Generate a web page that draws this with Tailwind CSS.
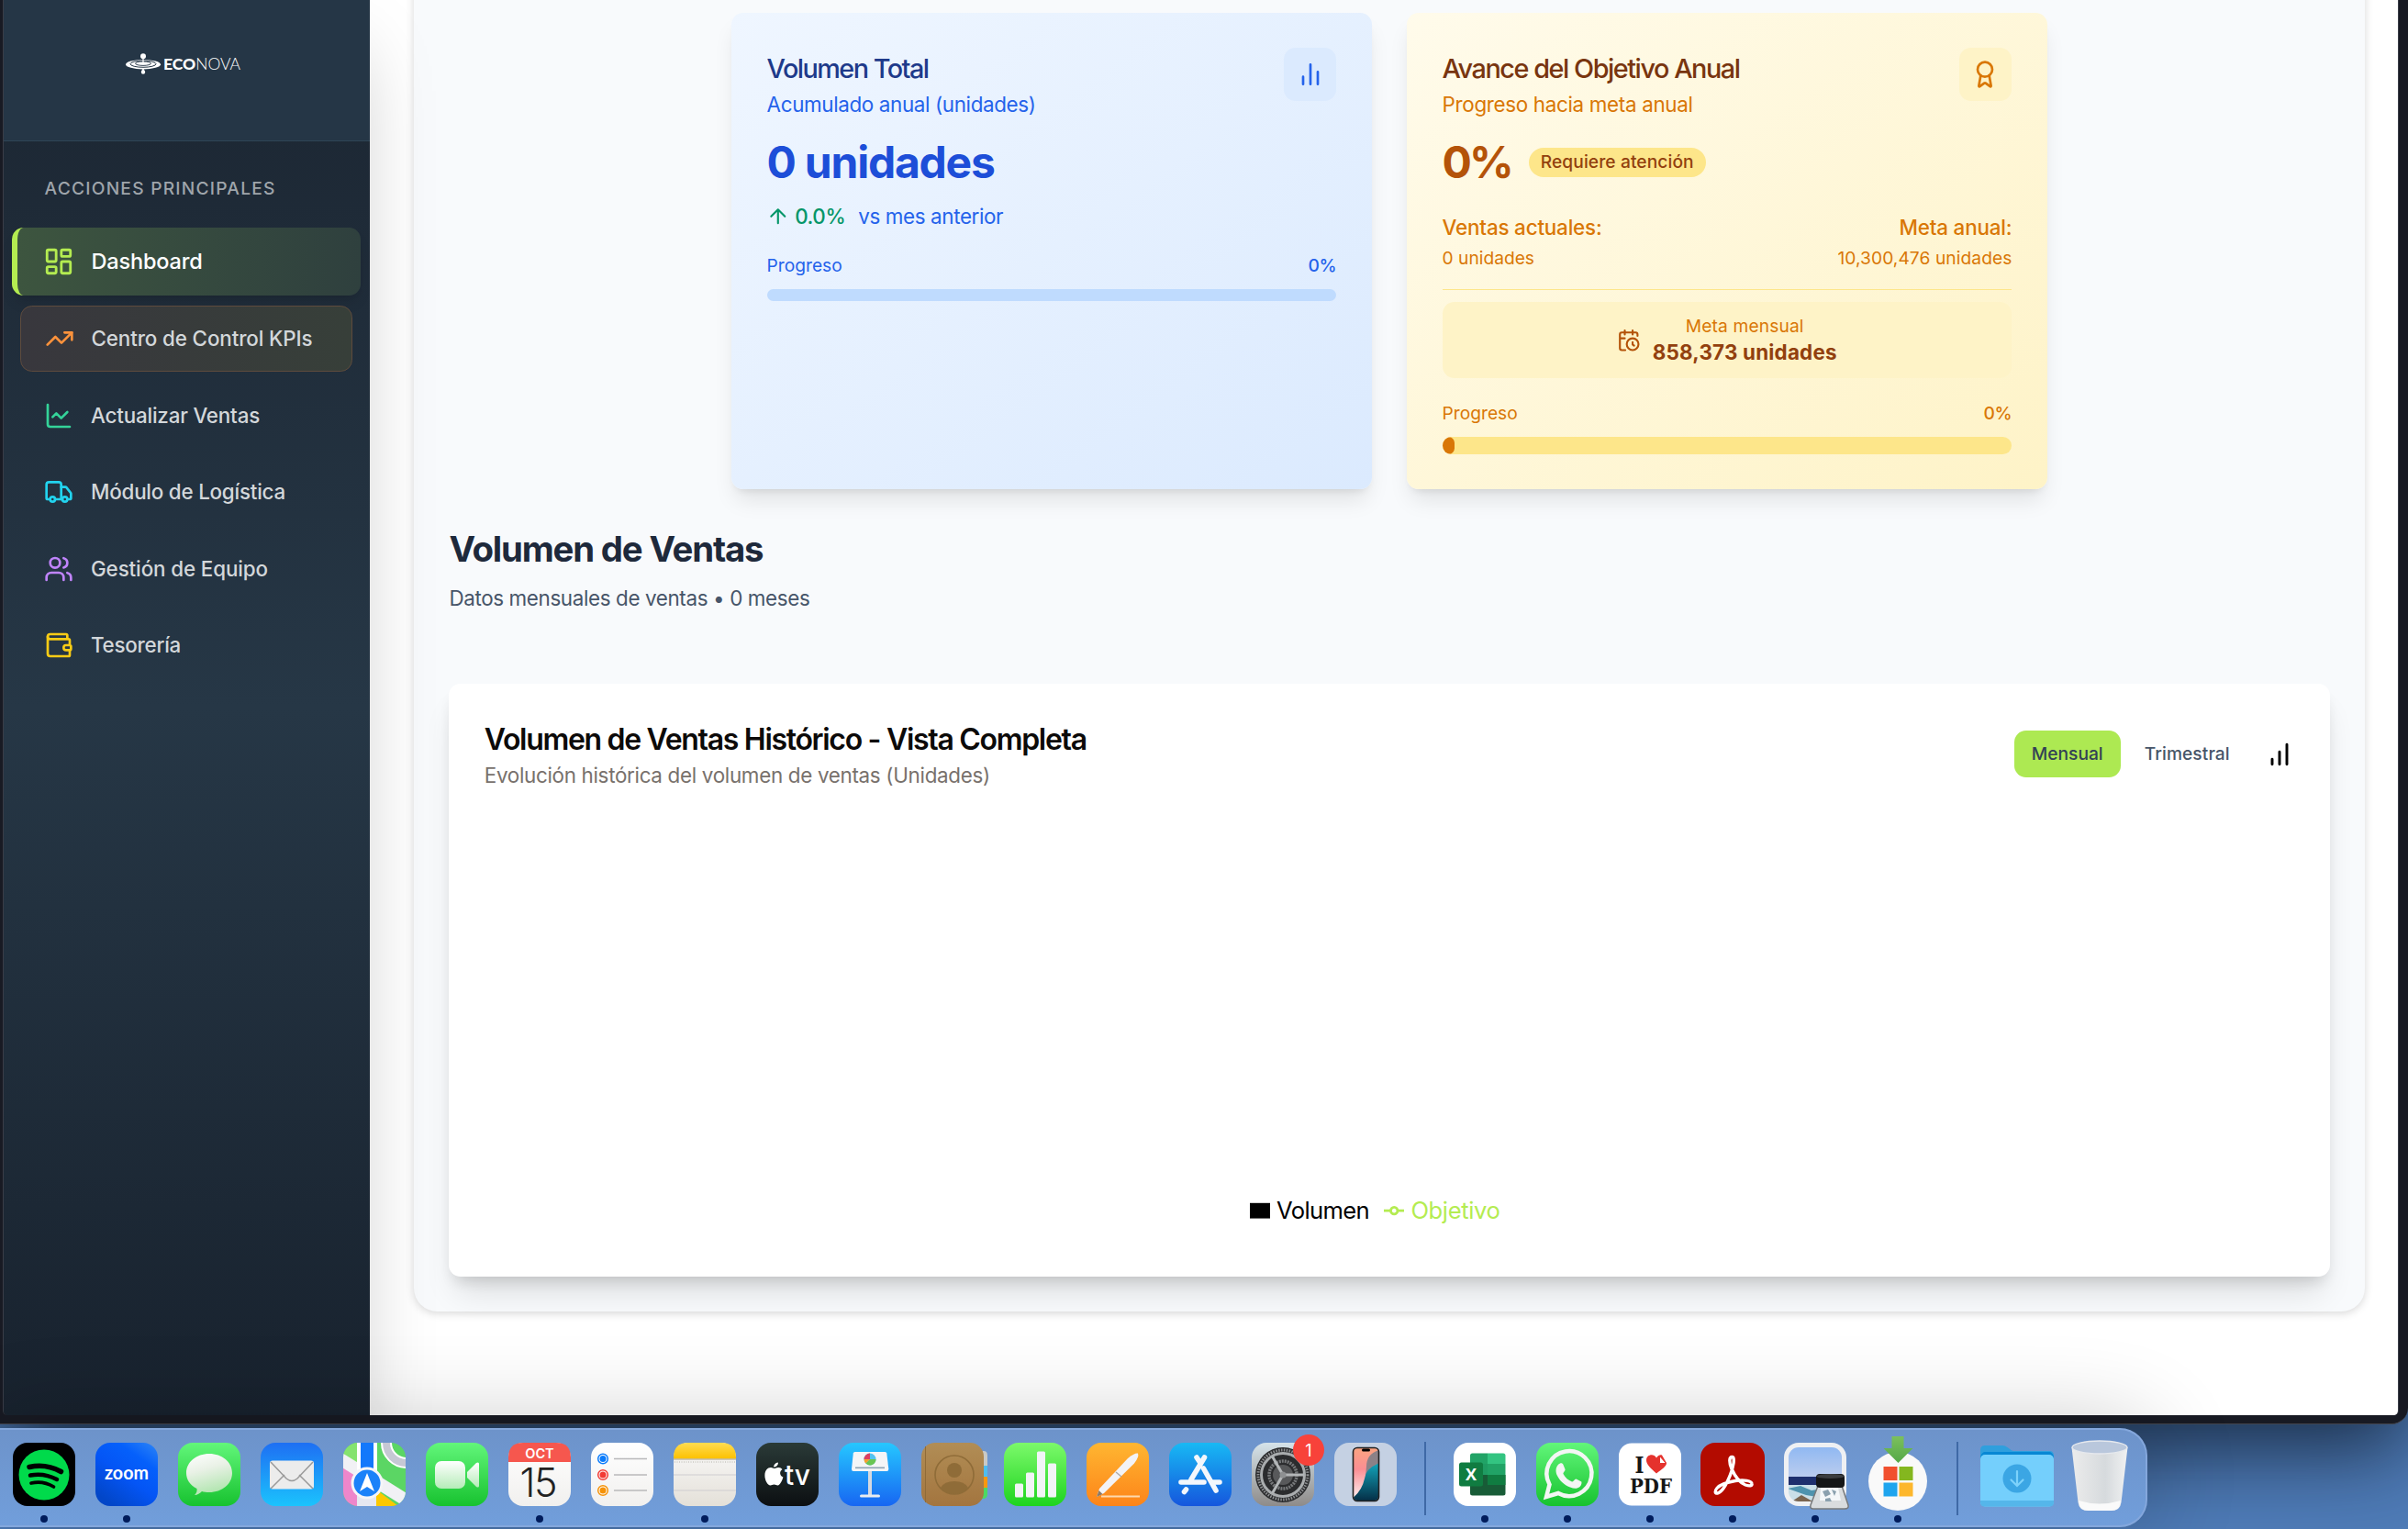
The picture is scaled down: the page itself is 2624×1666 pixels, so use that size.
<!DOCTYPE html>
<html lang="es" class="text-[25.6px]">
<head>
<meta charset="utf-8">
<title>Econova</title>
<script src="https://cdn.jsdelivr.net/npm/@tailwindcss/browser@4"></script>
</head>
<body class="h-[1666px] w-[2624px] overflow-hidden bg-[#4f7cb8] font-['Inter',sans-serif]">
<svg class="absolute size-0" aria-hidden="true">
  <defs>
    <linearGradient id="green" x2="0" y2="1"><stop stop-color="#62f67a"/><stop offset="1" stop-color="#17c22f"/></linearGradient>
    <linearGradient id="zoomblue" x1="1" y1="0" x2=".3" y2="1"><stop stop-color="#2f86f5"/><stop offset=".3" stop-color="#0560fb"/><stop offset=".6" stop-color="#0455f5"/><stop offset="1" stop-color="#0246c8"/></linearGradient>
    <linearGradient id="mail" x2="0" y2="1"><stop stop-color="#1e6ff3"/><stop offset="1" stop-color="#1bc3fd"/></linearGradient>
    <linearGradient id="bubble" x2=".3" y2="1"><stop stop-color="#fff"/><stop offset=".45" stop-color="#e9f1e6"/><stop offset="1" stop-color="#b4e6b2"/></linearGradient>
    <linearGradient id="cam" x2="0" y2="1"><stop stop-color="#fff"/><stop offset="1" stop-color="#b5ecb8"/></linearGradient>
    <linearGradient id="paper" x2="0" y2="1"><stop stop-color="#fff"/><stop offset="1" stop-color="#f1f0ee"/></linearGradient>
    <linearGradient id="note" x2="0" y2="1"><stop stop-color="#fafafa"/><stop offset="1" stop-color="#e4e0d8"/></linearGradient>
    <linearGradient id="yel" x2="0" y2="1"><stop stop-color="#ffdc52"/><stop offset="1" stop-color="#fdc100"/></linearGradient>
    <linearGradient id="tv" x2="0" y2="1"><stop stop-color="#2a3a37"/><stop offset="1" stop-color="#0c0f12"/></linearGradient>
    <linearGradient id="key" x2="0" y2="1"><stop stop-color="#26c7ff"/><stop offset="1" stop-color="#1766f2"/></linearGradient>
    <linearGradient id="brown" x2="0" y2="1"><stop stop-color="#b18d55"/><stop offset="1" stop-color="#a3753f"/></linearGradient>
    <linearGradient id="num" x2="0" y2="1"><stop stop-color="#7cf96b"/><stop offset="1" stop-color="#1ed41f"/></linearGradient>
    <linearGradient id="pages" x2="0" y2="1"><stop stop-color="#ffb631"/><stop offset="1" stop-color="#fd8419"/></linearGradient>
    <linearGradient id="store" x2="0" y2="1"><stop stop-color="#18b9f4"/><stop offset="1" stop-color="#1556dd"/></linearGradient>
    <linearGradient id="sys" x2="0" y2="1"><stop stop-color="#d5e3ea"/><stop offset="1" stop-color="#8e8b89"/></linearGradient>
    <linearGradient id="trash"><stop stop-color="#ececec"/><stop offset=".6" stop-color="#d6dadd"/><stop offset="1" stop-color="#f0f1f2"/></linearGradient>
    <linearGradient id="sky" x2="0" y2="1"><stop stop-color="#8fb8f2"/><stop offset="1" stop-color="#bccdee"/></linearGradient>
    <linearGradient id="screen" x2="0" y2="1"><stop stop-color="#fba57f"/><stop offset=".4" stop-color="#fb8e93"/><stop offset="1" stop-color="#fff"/></linearGradient>
    <linearGradient id="sea" x2="0" y2="1"><stop stop-color="#12a5bb"/><stop offset="1" stop-color="#04273f"/></linearGradient>
    <linearGradient id="arrow" x2="0" y2="1"><stop stop-color="#7cc05d"/><stop offset="1" stop-color="#54a847"/></linearGradient>
    <clipPath id="sq"><rect x="1" y="1" width="68" height="69" rx="16"/></clipPath>
    <clipPath id="photo"><rect x="6" y="6" width="58" height="59" rx="11"/></clipPath>
    <clipPath id="phone"><rect x="22" y="7" width="27" height="57" rx="4"/></clipPath>
  </defs>
</svg>

<!-- Browser window -->
<div class="relative flex h-[1552px] w-[2624px] rounded-br-[18px] border-b border-[#43454d] bg-[#181a23] pb-[9px] shadow-[0_30px_90px_rgba(10,20,35,0.75)]">
  <div class="ml-[3px] flex h-[1542px] w-[2611px] overflow-hidden rounded-b-[5px] border-x border-[#3a3d47]">

    <aside class="relative z-10 flex w-[399px] shrink-0 flex-col bg-linear-to-b from-[#1b2531] via-[#263746] to-[#18222e] shadow-[0_40px_80px_-19px_rgba(0,0,0,0.25)]">
      <div class="flex h-[154px] items-center justify-center border-b border-[#2f4556] bg-[#253646] pr-[7px] pb-[13px]">
        <svg class="h-6 w-[126px]" viewBox="0 0 126 38" fill="none">
          <ellipse cx="19" cy="19" rx="19" ry="5.2" fill="#fff"/>
          <ellipse cx="19" cy="18.5" rx="14" ry="3.6" stroke="#253646" stroke-width="1"/>
          <ellipse cx="19" cy="18" rx="8.5" ry="2.2" stroke="#253646" stroke-width=".9"/>
          <circle cx="19" cy="10" r="3" fill="#fff"/>
          <path d="M18.4 12h1.2v6h-1.2zM19 23c1 2 2.2 3 2.2 4.300a2.200 2.200 0 0 1-4.400 0c0-1.300 1.200-2.300 2.200-4.300z" fill="#fff"/>
          <text x="41" y="25" font-family="Lato" font-size="17.500" fill="#fff" textLength="84"><tspan font-weight="900">ECO</tspan><tspan font-weight="300">NOVA</tspan></text>
        </svg>
      </div>
      <div class="mt-[39px] ml-[44.500px] h-6 text-xs leading-[25.600px] font-medium whitespace-nowrap text-[#9fa5ab]"><span class="tracking-[0.064em]">ACCIONES PRINCIPALES</span></div>
      <nav class="mt-[17px] flex flex-col pr-[10px] pl-[9px] text-sm whitespace-nowrap text-[#d3d7da]">
        <div class="flex h-[74px] items-center rounded-lg border-l-[6px] border-[#b4ec51] bg-linear-to-r from-[#3d553f] to-[#2f403e] pb-[1px] pl-[27.500px] text-[23.500px] font-medium text-white shadow-lg">
          <svg class="size-[34px] text-[#b4ec51]" viewBox="0 0 24 24" fill="none" stroke="currentColor" stroke-width="2" stroke-linecap="round" stroke-linejoin="round"><rect x="3" y="3" width="7" height="9" rx="1"/><rect x="14" y="3" width="7" height="5" rx="1"/><rect x="14" y="12" width="7" height="9" rx="1"/><rect x="3" y="16" width="7" height="5" rx="1"/></svg>
          <span class="ml-[19px] tracking-[-0.0074em]">Dashboard</span>
        </div>
        <div class="mx-[9px] mt-[11px] flex h-[72px] items-center rounded-lg border border-[#5e4b3d] bg-linear-to-r from-[#38373d] to-[#373f39] pl-[25.500px] font-medium">
          <svg class="h-[32px] w-[32px] text-[#fb923c]" viewBox="0 0 24 24" fill="none" stroke="currentColor" stroke-width="2" stroke-linecap="round" stroke-linejoin="round"><path d="M16 7h6v6"/><path d="m22 7-8.500 8.500-5-5L2 17"/></svg>
          <span class="ml-[19px] tracking-[-0.0055em]">Centro de Control KPIs</span>
        </div>
        <div class="mx-[9px] mt-[12px] flex h-[72px] items-center pl-[26px] font-medium">
          <svg class="h-[32px] w-[32px] text-[#34d399]" viewBox="0 0 24 24" fill="none" stroke="currentColor" stroke-width="2" stroke-linecap="round" stroke-linejoin="round"><path d="M3 3v16a2 2 0 0 0 2 2h16"/><path d="m19 9-5 5-4-4-3 3"/></svg>
          <span class="ml-[19px] tracking-[-0.0088em]">Actualizar Ventas</span>
        </div>
        <div class="mx-[9px] mt-[11px] flex h-[72px] items-center pl-[26px] font-medium">
          <svg class="h-[32px] w-[32px] text-[#22d3ee]" viewBox="0 0 24 24" fill="none" stroke="currentColor" stroke-width="2" stroke-linecap="round" stroke-linejoin="round"><path d="M14 18V6a2 2 0 0 0-2-2H4a2 2 0 0 0-2 2v11a1 1 0 0 0 1 1h2"/><path d="M15 18H9"/><path d="M19 18h2a1 1 0 0 0 1-1v-3.650a1 1 0 0 0-.220-.624l-3.480-4.350A1 1 0 0 0 17.520 8H14"/><circle cx="17" cy="18" r="2"/><circle cx="7" cy="18" r="2"/></svg>
          <span class="ml-[19px] tracking-[-0.01em]">Módulo de Logística</span>
        </div>
        <div class="mx-[9px] mt-[12px] flex h-[72px] items-center pl-[26px] font-medium">
          <svg class="h-[32px] w-[32px] text-[#c084fc]" viewBox="0 0 24 24" fill="none" stroke="currentColor" stroke-width="2" stroke-linecap="round" stroke-linejoin="round"><path d="M16 21v-2a4 4 0 0 0-4-4H6a4 4 0 0 0-4 4v2"/><circle cx="9" cy="7" r="4"/><path d="M22 21v-2a4 4 0 0 0-3-3.870"/><path d="M16 3.130a4 4 0 0 1 0 7.750"/></svg>
          <span class="ml-[19px] tracking-[-0.0052em]">Gestión de Equipo</span>
        </div>
        <div class="mx-[9px] mt-[11px] flex h-[72px] items-center pl-[26px] font-medium">
          <svg class="h-[32px] w-[32px] text-[#facc15]" viewBox="0 0 24 24" fill="none" stroke="currentColor" stroke-width="2" stroke-linecap="round" stroke-linejoin="round"><path d="M19 7V4a1 1 0 0 0-1-1H5a2 2 0 0 0 0 4h15a1 1 0 0 1 1 1v4h-3a2 2 0 0 0 0 4h3a1 1 0 0 0 1-1v-2a1 1 0 0 0-1-1"/><path d="M3 5v14a2 2 0 0 0 2 2h15a1 1 0 0 0 1-1v-4"/></svg>
          <span class="ml-[19px] tracking-[-0.0114em]">Tesorería</span>
        </div>
      </nav>
    </aside>

    <main class="flex h-[1542px] min-w-0 flex-1 flex-col bg-white pr-[36px] pl-[48px]">
      <div class="-mt-[40px] flex h-[1469px] shrink-0 flex-col rounded-2xl bg-[#f8fafc] px-6 pt-[54px] shadow-[0_2px_10px_rgba(0,0,0,0.16)]">

        <section class="mx-auto grid h-[519px] w-full max-w-4xl grid-cols-2 gap-6 whitespace-nowrap">
          <article class="rounded-lg bg-linear-to-br from-[#eff6ff] to-[#dbeafe] px-6 pt-[38px] shadow-[0_16px_24px_-5px_rgba(0,0,0,0.10),0_6px_10px_-6px_rgba(0,0,0,0.12)]">
            <div class="flex h-[86px] justify-between">
              <div class="pt-2">
                <h3 class="mt-[-5px] text-lg leading-[29px] font-medium tracking-[-0.053em] text-[#1e3a8a]">Volumen Total</h3>
                <p class="mt-[9px] text-sm leading-[32px] tracking-[-0.0158em] text-[#2563eb]">Acumulado anual (unidades)</p>
              </div>
              <div class="flex size-[57.600px] items-center justify-center rounded-lg bg-[#dbeafe]">
                <svg class="size-[32px] text-[#2563eb]" viewBox="0 0 24 24" fill="none" stroke="currentColor" stroke-width="2" stroke-linecap="round"><path d="M18 20V10M12 20V4M6 20v-6"/></svg>
              </div>
            </div>
            <p class="mt-[14.500px] text-3xl leading-[48px] font-bold tracking-[-0.0258em] text-[#1d4ed8]">0 unidades</p>
            <div class="mt-[19px] flex h-[32px] items-center text-sm leading-[32px]">
              <svg class="h-[25.600px] w-[25.600px] -ml-[1px] text-[#059669]" viewBox="0 0 24 24" fill="none" stroke="currentColor" stroke-width="2" stroke-linecap="round" stroke-linejoin="round"><path d="m5 12 7-7 7 7M12 19V5"/></svg>
              <span class="ml-[6px] font-medium tracking-[-0.0194em] text-[#059669]">0.0%</span>
              <span class="ml-[14px] tracking-[-0.0164em] text-[#2563eb]">vs mes anterior</span>
            </div>
            <div class="mt-[25px] flex justify-between text-xs leading-[25.600px] text-[#2563eb]"><span>Progreso</span><span class="font-medium tracking-[-0.0118em]">0%</span></div>
            <div class="mt-[12.500px] h-[13px] rounded-full bg-[#bfdbfe]"></div>
          </article>

          <article class="rounded-lg bg-linear-to-br from-[#fffbeb] to-[#fef3c7] px-6 pt-[38px] shadow-[0_16px_24px_-5px_rgba(0,0,0,0.10),0_6px_10px_-6px_rgba(0,0,0,0.12)]">
            <div class="flex h-[86px] justify-between">
              <div class="pt-2">
                <h3 class="mt-[-5px] text-lg leading-[29px] font-medium tracking-[-0.0503em] text-[#78350f]">Avance del Objetivo Anual</h3>
                <p class="mt-[9px] text-sm leading-[32px] tracking-[-0.0144em] text-[#d97706]">Progreso hacia meta anual</p>
              </div>
              <div class="flex size-[57.600px] items-center justify-center rounded-lg bg-[#fef3c7]">
                <svg class="size-[32px] -ml-[1px] text-[#d97706]" viewBox="0 0 24 24" fill="none" stroke="currentColor" stroke-width="2" stroke-linecap="round" stroke-linejoin="round"><path d="m15.477 12.890 1.515 8.526a.5.5 0 0 1-.810.470l-3.580-2.687a1 1 0 0 0-1.197 0l-3.586 2.686a.5.5 0 0 1-.810-.469l1.514-8.526"/><circle cx="12" cy="8" r="6"/></svg>
              </div>
            </div>
            <div class="mt-[14.500px] flex h-[48px] items-center">
              <span class="text-3xl leading-[48px] font-bold tracking-[-0.06em] text-[#b45309]">0%</span>
              <span class="ml-[19px] flex h-[32px] items-center rounded-full bg-[#fde68a] px-2 text-xs font-medium tracking-[0.0046em] text-[#92400e]">Requiere atención</span>
            </div>
            <div class="mt-[31.500px] flex justify-between text-sm leading-[32px] font-medium text-[#d97706]"><span class="tracking-[-0.0079em]">Ventas actuales:</span><span class="tracking-[-0.0074em]">Meta anual:</span></div>
            <div class="mt-[4px] flex justify-between text-xs leading-[26px] text-[#d97706]"><span>0 unidades</span><span class="tracking-[0.0036em]">10,300,476 unidades</span></div>
            <div class="mt-[20.500px] h-[1.600px] bg-[#fde68a]"></div>
            <div class="mt-[13px] flex h-[83px] items-center justify-center rounded-lg bg-[#fef3c7]">
              <svg class="h-[25.600px] w-[25.600px] text-[#b45309]" viewBox="0 0 24 24" fill="none" stroke="currentColor" stroke-width="2" stroke-linecap="round" stroke-linejoin="round"><path d="M21 7.500V6a2 2 0 0 0-2-2H5a2 2 0 0 0-2 2v14a2 2 0 0 0 2 2h3.500M16 2v4M8 2v4M3 10h5M17.500 17.500 16 16.300V14"/><circle cx="16" cy="16" r="6"/></svg>
              <div class="ml-2 flex flex-col items-center">
                <span class="text-xs leading-[26px] tracking-[0.0074em] text-[#d97706]">Meta mensual</span>
                <span class="text-sm leading-[32px] font-bold tracking-[0.0087em] text-[#92400e]">858,373 unidades</span>
              </div>
            </div>
            <div class="mt-[25px] flex justify-between text-xs leading-[26px] text-[#d97706]"><span>Progreso</span><span class="font-medium tracking-[-0.0118em]">0%</span></div>
            <div class="mt-[13px] h-[19px] overflow-hidden rounded-full bg-[#fde68a]"><div class="h-full rounded-full bg-[#d97706]" style="width:2.1%"></div></div>
          </article>
        </section>

        <h2 class="mt-[41px] text-2xl leading-[48px] font-bold tracking-[-0.0312em] whitespace-nowrap text-[#1e293b]">Volumen de Ventas</h2>
        <p class="mt-[14px] text-sm leading-[32px] tracking-[-0.0163em] whitespace-nowrap text-[#475569]">Datos mensuales de ventas • 0 meses</p>

        <section class="mt-[77px] flex h-[646px] flex-col rounded-lg bg-white px-6 whitespace-nowrap shadow-[0_24px_34px_-8px_rgba(0,0,0,0.12),0_10px_16px_-6px_rgba(0,0,0,0.14)]">
          <div class="flex justify-between pt-[38px]">
            <div>
              <h3 class="mt-[4px] text-xl leading-[38px] font-semibold tracking-[-0.0409em] text-[#0c0a09]">Volumen de Ventas Histórico - Vista Completa</h3>
              <p class="mt-[3.500px] text-sm leading-[32px] tracking-[-0.0137em] text-[#78716c]">Evolución histórica del volumen de ventas (Unidades)</p>
            </div>
            <div class="mt-[13px] flex h-[51px] items-center text-xs font-medium">
              <button class="flex h-[51px] w-[116px] items-center justify-center rounded-lg bg-[#ade952] text-[#334155]">Mensual</button>
              <button class="ml-[26px] tracking-[0.0042em] text-[#475569]">Trimestral</button>
              <svg class="ml-[38.500px] size-[32px] text-black" viewBox="0 0 24 24" fill="none" stroke="currentColor" stroke-width="2.200" stroke-linecap="round"><path d="M12 20V10M18 20V4M6 20v-4"/></svg>
            </div>
          </div>
          <div class="mt-auto mr-[32px] mb-[53px] flex items-center justify-center text-base leading-[38px]">
            <svg class="size-[22.400px]" viewBox="0 0 32 32"><path d="M0 4h32v24H0z"/></svg>
            <span class="ml-[7px] tracking-[-0.0251em] text-black">Volumen</span>
            <svg class="ml-[16px] size-[22.400px]" viewBox="0 0 32 32" fill="none" stroke="#b4ec51" stroke-width="4"><path d="M0 16h10.670a5.330 5.330 0 1 1 10.660 0H32M21.330 16a5.330 5.330 0 1 1-10.660 0"/></svg>
            <span class="ml-[7px] tracking-[-0.0155em] text-[#b4ec51]">Objetivo</span>
          </div>
        </section>
      </div>
    </main>
  </div>
</div>

<!-- Dock -->
<footer class="relative z-20 mt-[4px] flex h-[108px] w-[2340px] items-start rounded-r-[30px] border-y-2 border-r-2 border-[#84a7dc] bg-linear-to-b from-[#6d93ca] to-[#719edb] pt-[13px] pl-[3px] shadow-[0_0_100px_rgba(0,0,0,0.24)]">
  <div class="flex w-[90px] flex-col items-center"><svg class="h-[72px] w-[70px]" viewBox="0 0 70 72"><rect x="1" y="1" width="68" height="69" rx="16"/><circle cx="35" cy="36" r="27.500" fill="#00da4b"/><g fill="none" stroke="#000" stroke-linecap="round"><path d="M19 27.500q18-4 34.500 5" stroke-width="5.500"/><path d="M20 36.500q15-3 29 4.500" stroke-width="4.500"/><path d="M21 45q13-3 24.500 4" stroke-width="3.700"/></g></svg><i class="mt-[8px] mr-[1px] size-[8px] rounded-full bg-[#001c5c]"></i></div>
  <div class="flex w-[90px] flex-col items-center"><svg class="h-[72px] w-[70px]" viewBox="0 0 70 72"><rect x="1" y="1" width="68" height="69" rx="16" fill="url(#zoomblue)"/><text x="11" y="41" font-size="20" font-weight="700" font-family="Lato" fill="#fff" textLength="48" lengthAdjust="spacingAndGlyphs">zoom</text></svg><i class="mt-[8px] mr-[1px] size-[8px] rounded-full bg-[#001c5c]"></i></div>
  <div class="flex w-[90px] justify-center"><svg class="h-[72px] w-[70px]" viewBox="0 0 70 72"><rect x="1" y="1" width="68" height="69" rx="16" fill="url(#green)"/><path d="M35 13c14 0 25 9 25 21S49 55 35 55c-3 0-6-.4-8-1-2 2-5 4-8 4 2-2 3-4 2.500-7C14 47 10 41 10 34c0-12 11-21 25-21z" fill="url(#bubble)"/></svg></div>
  <div class="flex w-[90px] justify-center"><svg class="h-[72px] w-[70px]" viewBox="0 0 70 72"><rect x="1" y="1" width="68" height="69" rx="16" fill="url(#mail)"/><rect x="11" y="20.500" width="48" height="31" rx="3" fill="#ececec"/><path d="M12 51l15-15M58 51L43 36M12 22l17 18q6 5 12 0l17-18" fill="none" stroke="#9a9a9a" stroke-width="1.500"/></svg></div>
  <div class="flex w-[90px] justify-center"><svg class="h-[72px] w-[70px]" viewBox="0 0 70 72"><g clip-path="url(#sq)"><path fill="#5bd664" d="M0 0h70v72H0z"/><path d="M0 0h20v26L0 12z" fill="#85e36f"/><path d="M0 26l20 14v32H0z" fill="#ee86cb"/><path d="M0 12l70 44v16L0 28z" fill="#f1f1f5"/><path d="M16 40h22v32H16z" fill="#e5e7f0"/><path d="M37 52l24 18H37z" fill="#fcc800"/><path d="M16 0h22v44H16z" fill="#fff"/><path d="M20 0h14v46H20z" fill="#1378fb"/><circle cx="70" cy="1" r="22" fill="none" stroke="#fff" stroke-width="12"/><circle cx="70" cy="1" r="22" fill="none" stroke="#c6c8d4" stroke-width="8"/></g><circle cx="27" cy="45" r="17.500" fill="#f5f5f8"/><circle cx="27" cy="45" r="14.500" fill="#1b82f9"/><path d="M27 34l8 20-8-5-8 5z" fill="#fff"/></svg></div>
  <div class="flex w-[90px] justify-center"><svg class="h-[72px] w-[70px]" viewBox="0 0 70 72"><rect x="1" y="1" width="68" height="69" rx="16" fill="url(#green)"/><rect x="11" y="21" width="33" height="30" rx="7" fill="url(#cam)"/><path d="M46 33l10-10q3-1.500 3 1v24q0 2.500-3 1L46 39z" fill="url(#cam)"/></svg></div>
  <div class="flex w-[90px] flex-col items-center"><svg class="h-[72px] w-[70px]" viewBox="0 0 70 72"><rect x="1" y="1" width="68" height="69" rx="16" fill="url(#paper)"/><path d="M1 22V17Q1 1 17 1h36q16 0 16 16v5z" fill="#f6574e"/><text x="35" y="17.500" text-anchor="middle" font-size="14.500" font-weight="600" fill="#fff">OCT</text><text x="34" y="60" text-anchor="middle" font-size="43" font-weight="300" fill="#222" textLength="41">15</text></svg><i class="mt-[8px] mr-[1px] size-[8px] rounded-full bg-[#001c5c]"></i></div>
  <div class="flex w-[90px] justify-center"><svg class="h-[72px] w-[70px]" viewBox="0 0 70 72"><rect x="1" y="1" width="68" height="69" rx="16" fill="url(#paper)"/><g fill="#fff" stroke-width="1.500"><circle cx="14" cy="18.500" r="5.300" stroke="#0a7bfb"/><circle cx="14" cy="36" r="5.300" stroke="#f23b35"/><circle cx="14" cy="53" r="5.300" stroke="#f59207"/></g><circle cx="14" cy="18.500" r="3.500" fill="#0a7bfb"/><circle cx="14" cy="36" r="3.500" fill="#f23b35"/><circle cx="14" cy="53" r="3.500" fill="#f59207"/><path d="M26 18.500h36M26 36h36M26 53h36" stroke="#b9b9bb" stroke-width="1.300"/></svg></div>
  <div class="flex w-[90px] flex-col items-center"><svg class="h-[72px] w-[70px]" viewBox="0 0 70 72"><rect x="1" y="1" width="68" height="69" rx="16" fill="url(#note)"/><path d="M1 18.500V17Q1 1 17 1h36q16 0 16 16v1.500z" fill="url(#yel)"/><path d="M1 19h68" stroke="#a9a08c"/><path d="M2 22h66" stroke="#b5b2ab" stroke-dasharray="1 1.500"/><path d="M1 36h68M1 53h68" stroke="#cfcdd0"/></svg><i class="mt-[8px] mr-[1px] size-[8px] rounded-full bg-[#001c5c]"></i></div>
  <div class="flex w-[90px] justify-center"><svg class="h-[72px] w-[70px]" viewBox="0 0 70 72"><rect x="1" y="1" width="68" height="69" rx="16" fill="url(#tv)"/><path transform="translate(10 22.500)" fill="#fff" d="M10.500 6.500C12 6.500 13.300 5.300 15.500 5.400c1.600.1 3 .7 4 2-3.500 2.200-3 7 .9 8.600C19.300 19.500 17 25 14.500 25c-1.600 0-2-1-4-1s-2.500 1-4 1C3.500 25 .4 19.500.4 14.300.4 9 3.500 5.600 7 5.600c1.500 0 2.500.9 3.500.9zM10.200 5C10 2.500 12.200.2 14.900 0c.3 2.700-2 5-4.700 5z"/><text x="32" y="47" font-size="30" font-weight="500" fill="#fff" textLength="28" lengthAdjust="spacingAndGlyphs">tv</text></svg></div>
  <div class="flex w-[90px] justify-center"><svg class="h-[72px] w-[70px]" viewBox="0 0 70 72"><rect x="1" y="1" width="68" height="69" rx="16" fill="url(#key)"/><path d="M33 32h4v27h-4z" fill="#d4d9e0"/><rect x="24" y="57.500" width="22" height="3" rx="1.500" fill="#e8ebf0"/><path d="M18.500 11h33q1.500 0 1.800 1.500l2 17q.2 2.500-2 2.500H17q-2.200 0-2-2.500l1.800-17Q17 11 18.500 11z" fill="#f4f5f7"/><path d="M19 28.300h32" stroke="#8ea3b5" stroke-width="1.600"/><circle cx="35" cy="19" r="6.500" fill="#53c3f1"/><path d="M35 19l6.500 0a6.500 6.500 0 0 1-11 4.600z" fill="#69c553"/><path d="M35 19l-4.500 4.600a6.500 6.500 0 0 1-2-4.600z" fill="#f6a12e"/><path d="M35 19h-6.500a6.500 6.500 0 0 1 6.500-6.500z" fill="#dc3f62"/></svg></div>
  <div class="flex w-[90px] justify-center"><svg class="ml-[4px] h-[72px] w-[74px]" viewBox="0 0 74 72"><path d="M62 10h7q4 0 4 5v11H62z" fill="#c9c9c6"/><path d="M62 26h11v12H62z" fill="#4fbdf0"/><path d="M62 38h11v12H62z" fill="#f8970f"/><path d="M62 50h11v7q0 5-5 5h-6z" fill="#4cd964"/><rect x="1" y="1" width="68" height="69" rx="15" fill="url(#brown)"/><path d="M5.500 5v61" stroke="#8f6b38"/><circle cx="37" cy="36" r="21" fill="none" stroke="#8f6c38" stroke-width="1.600"/><circle cx="37" cy="31" r="8" fill="#8f6c38"/><path d="M22 50q4-7 15-7t15 7q-6 7-15 7t-15-7z" fill="#8f6c38"/></svg></div>
  <div class="flex w-[90px] justify-center"><svg class="h-[72px] w-[70px]" viewBox="0 0 70 72"><rect x="1" y="1" width="68" height="69" rx="16" fill="url(#num)"/><g fill="#f1f4f6"><rect x="13" y="45.500" width="9" height="15" rx="1.500"/><rect x="25" y="33.500" width="9" height="27" rx="1.500"/><rect x="37" y="10.500" width="9" height="50" rx="1.500"/><rect x="49" y="23.500" width="9" height="37" rx="1.500"/></g></svg></div>
  <div class="flex w-[90px] justify-center"><svg class="h-[72px] w-[70px]" viewBox="0 0 70 72"><rect x="1" y="1" width="68" height="69" rx="16" fill="url(#pages)"/><path d="M17 59.500h42" stroke="#fdd9ae" stroke-width="2"/><path d="M12 60l3-9L46 18q7-6 11-5.500 1.500 4-4 11L20 56z" fill="#f3f3f5"/><path d="M12 60l2.500-7 4 4z" fill="#8c7a67"/><path d="M33 33l6 5" stroke="#aaa" stroke-width="1.500"/></svg></div>
  <div class="flex w-[90px] justify-center"><svg class="h-[72px] w-[70px]" viewBox="0 0 70 72"><rect x="1" y="1" width="68" height="69" rx="16" fill="url(#store)"/><g stroke="#f3f7fc" stroke-width="5.600" stroke-linecap="round"><path d="M39.500 17L25 41M31 17l4 6M38.500 29L52 53M14 44h25M49 44h7M19.500 52l-2 2.500"/></g></svg></div>
  <div class="relative flex w-[90px] justify-center"><svg class="h-[72px] w-[70px]" viewBox="0 0 70 72"><rect x="1" y="1" width="68" height="69" rx="16" fill="url(#sys)"/><circle cx="35" cy="36" r="30" fill="#2b2c2e"/><circle cx="35" cy="36" r="27" fill="none" stroke="#8d8f91" stroke-width="3" stroke-dasharray="1.500 1.400"/><circle cx="35" cy="36" r="23.500" fill="none" stroke="#a9acae" stroke-width="3"/><circle cx="35" cy="36" r="15" fill="none" stroke="#77797b" stroke-width="3.500" stroke-dasharray="2 1"/><circle cx="35" cy="36" r="11" fill="#58595b"/><path d="M35 36h23M35 36L23.500 16M35 36L23.500 56" stroke="#b3b6b8" stroke-width="3"/><circle cx="35" cy="36" r="3.500" fill="#8e9092"/></svg><span class="absolute top-[-8px] right-[0px] flex size-[34px] items-center justify-center rounded-full bg-[#f8423a] text-[18px] text-white">1</span></div>
  <div class="flex w-[90px] justify-center"><svg class="h-[72px] w-[70px]" viewBox="0 0 70 72"><rect x="1" y="1" width="68" height="69" rx="16" fill="#c5d1e3"/><g clip-path="url(#phone)"><path fill="url(#screen)" d="M20 5h31v62H20z"/><path d="M50 9q-14 4-14 18l-1 10 15-6z" fill="#8c8187"/><path d="M50 23q-15 6-16 17-3 14-14 22v5h30z" fill="url(#sea)"/></g><rect x="21.500" y="6.500" width="28" height="58" rx="4.500" fill="none" stroke="#222" stroke-width="1.600"/><rect x="31" y="7.500" width="9" height="3" rx="1.500"/></svg></div>
  <div class="flex w-[40px] justify-center"><i class="h-[80px] w-[2px] bg-[#3f69a6]"></i></div>
  <div class="flex w-[90px] flex-col items-center"><svg class="h-[72px] w-[70px]" viewBox="0 0 70 72"><rect x="1" y="1" width="68" height="69" rx="16" fill="#fff"/><path d="M19 15q0-2.500 2.500-2.500H38V24H19z" fill="#21a366"/><path d="M38 12.500h17q2.500 0 2.500 2.500v9H38z" fill="#33c481"/><path d="M19 24h19v12H19z" fill="#1f9b62"/><path d="M38 24h19.500v12H38z" fill="#21a366"/><path d="M19 36h38.500v20q0 2.500-2.500 2.500H21.500Q19 58.500 19 56z" fill="#185c37"/><path d="M38 36h19.500v11H38z" fill="#107c41"/><rect x="7" y="22.500" width="26" height="26" rx="2.500" fill="#107c41"/><text x="20" y="42" font-family="Open Sans" font-size="18" font-weight="700" fill="#fff" text-anchor="middle">X</text></svg><i class="mt-[8px] mr-[1px] size-[8px] rounded-full bg-[#001c5c]"></i></div>
  <div class="flex w-[90px] flex-col items-center"><svg class="h-[72px] w-[70px]" viewBox="0 0 70 72"><rect x="1" y="1" width="68" height="69" rx="16" fill="url(#green)"/><path d="M12 60l3.500-13.500a24.500 24.500 0 1 1 9.500 9.500z" fill="none" stroke="#f4f6f4" stroke-width="4.500"/><path d="M27 23.500c1.500-.5 3 0 3.500 1.500l2 5c.5 1.500-2.500 3.500-2 5 2 4 5.500 7 9.500 8.500 1.500.5 3-3.500 4.500-3l5.500 2.800c1 .6.5 4-1.500 5.700-3 2.500-6.500 2-10.500.5-7-2.800-11-7-14-12.500-2.500-4.500-2-11 3-13.500z" fill="#f4f6f4"/></svg><i class="mt-[8px] mr-[1px] size-[8px] rounded-full bg-[#001c5c]"></i></div>
  <div class="flex w-[90px] flex-col items-center"><svg class="h-[72px] w-[70px]" viewBox="0 0 70 72"><rect x="1" y="1.500" width="68" height="68" rx="14" fill="#fff"/><text x="18.500" y="34" font-family="DejaVu Serif" font-size="24" font-weight="700" fill="#161616" textLength="10" lengthAdjust="spacingAndGlyphs">I</text><text x="13" y="56" font-family="DejaVu Serif" font-size="23" font-weight="700" fill="#161616" textLength="46" lengthAdjust="spacingAndGlyphs">PDF</text><path d="M42 34.500C36 29 31 25 31 20c0-6 8-8 11-2.500 2-3 4-3.500 6-3l5 8.500c0 4-5 6.500-11 11.500z" fill="#e5322d"/><path d="M45.500 23.500v-8l7 8z" fill="#fff" stroke="#e5322d"/></svg><i class="mt-[8px] mr-[1px] size-[8px] rounded-full bg-[#001c5c]"></i></div>
  <div class="flex w-[90px] flex-col items-center"><svg class="h-[72px] w-[70px]" viewBox="0 0 70 72"><rect x="0" y="1" width="70" height="69" rx="16" fill="#b30b00"/><path d="M34.500 16.500c-3.500 0-3.500 6-.5 13 4 9 9 15 15 17.500 4.500 1.500 7.500 1 7-1.500-.5-3-8-4.500-18-3-9 1.500-17 4.500-20 8-2.500 3-2.500 6 .5 5.500 4.500-1 10-10 14-20 3.500-9 5.500-19.500 2-19.500z" fill="none" stroke="#fff" stroke-width="3.400"/></svg><i class="mt-[8px] mr-[1px] size-[8px] rounded-full bg-[#001c5c]"></i></div>
  <div class="flex w-[90px] flex-col items-center"><svg class="mb-[-4px] ml-[4px] h-[76px] w-[74px]" viewBox="0 0 74 76"><rect x="1" y="1" width="68" height="69" rx="16" fill="#eef0f3"/><g clip-path="url(#photo)"><path fill="url(#sky)" d="M5 5h60v34H5z"/><path fill="#1e2f6d" d="M5 38h60v10H5z"/><path fill="#c9dfe8" d="M5 47h60v20H5z"/><path d="M5 51l14-3 12 5 12-2v10l-18-3z" fill="#4e93ae"/><path d="M8 66l12-8 14 8z" fill="#7a6550"/></g><path d="M38 48h26l7 21q1 4-4 4H33q-4 0-3-4z" fill="#d9dcde" stroke="#77797b" stroke-width="1.500"/><path d="M41 50h19l3 14H40z" fill="#f4f7f9"/><path d="M43 54l6-2 3 5-6 3zM53 52l5 2-2 5zM46 62l5-1 2 4h-7z" fill="#8aa0ae"/><rect x="36" y="35" width="31" height="15" rx="4" fill="#151617"/><ellipse cx="51.500" cy="37.500" rx="15" ry="2.500" fill="#3b3d3f"/></svg><i class="mt-[8px] mr-[1px] size-[8px] rounded-full bg-[#001c5c]"></i></div>
  <div class="flex w-[90px] flex-col items-center"><svg class="mt-[-8px] mb-[-4px] h-[84px] w-[70px]" viewBox="0 -8 70 84"><circle cx="35" cy="43" r="32" fill="#f9f9f9"/><path d="M19.500 27h15v15h-15z" fill="#f1502f"/><path d="M36.500 27h15v15h-15z" fill="#84b71f"/><path d="M19.500 44.500h15v15h-15z" fill="#1fa5ee"/><path d="M36.500 44.500h15v15h-15z" fill="#fdb72c"/><path d="M28.500-6h13V7h10l-16 16-16-16h9z" fill="url(#arrow)"/></svg><i class="mt-[8px] mr-[1px] size-[8px] rounded-full bg-[#001c5c]"></i></div>
  <div class="flex w-[40px] justify-center"><i class="h-[80px] w-[2px] bg-[#3f69a6]"></i></div>
  <div class="flex w-[90px] justify-center"><svg class="h-[72px] w-[80px]" viewBox="0 0 80 72"><path d="M0 9q0-5 5-5h19q3 0 5.500 2l4 3q1 1 3 1H75q5 0 5 5v8H0z" fill="#2f9fdd"/><path d="M0 18q0-5 4-7h72q4 2 4 7z" fill="#0787d4"/><rect y="14" width="80" height="56.500" rx="5" fill="#74cffc"/><path d="M0 64h80v2q0 4.500-5 4.500H5Q0 70.500 0 66z" fill="#55b6ea"/><circle cx="40" cy="40" r="15.500" fill="#3ba6e4"/><path d="M40 32v15M33.500 41.500L40 48l6.500-6.500" fill="none" stroke="#7dd2fb" stroke-width="2.200" stroke-linecap="round"/></svg></div>
  <div class="flex w-[90px] justify-center"><svg class="mt-[-2px] h-[78px] w-[62px]" viewBox="0 0 62 78"><path d="M.5 8h61l-7 60q-1 9-11 9h-25q-10 0-11-9z" fill="url(#trash)"/><path d="M8 66q23 7 46 0l-.5 3q-1 8-10 8h-25q-9 0-10-8z" fill="#fafafa"/><ellipse cx="31" cy="8" rx="30" ry="7" fill="#b9c7dc" stroke="#e6e9ee" stroke-width="1.300"/></svg></div>
</footer>
</body>
</html>
